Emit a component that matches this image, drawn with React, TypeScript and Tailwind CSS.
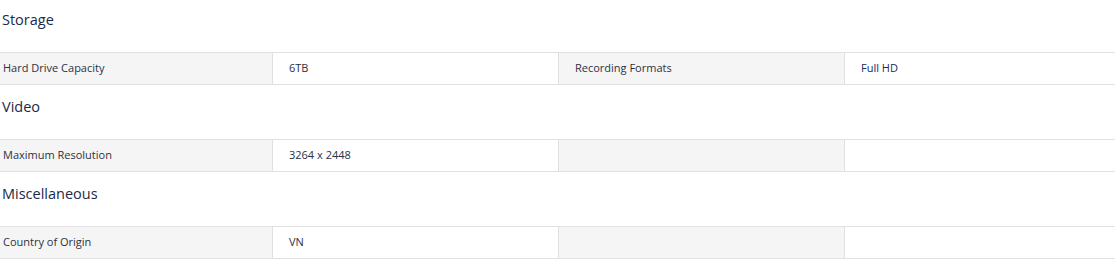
import React from "react";

const sections: { title: string; cells: [string, string, string, string] }[] = [
  { title: "Storage", cells: ["Hard Drive Capacity", "6TB", "Recording Formats", "Full HD"] },
  { title: "Video", cells: ["Maximum Resolution", "3264 x 2448", "", ""] },
  { title: "Miscellaneous", cells: ["Country of Origin", "VN", "", ""] },
];

export default function App() {
  return (
    <div className="w-[1115px] bg-white" style={{ fontFamily: '"Open Sans", "Noto Sans", sans-serif' }}>
      {sections.map((s, i) => (
        <div key={i} className="mb-[2px]">
          <div className="h-[52px] flex items-center pl-[2px] pb-[12px] text-[14.5px] text-[#1b2a48]">{s.title}</div>
          <div className="grid grid-cols-[272px_286px_286px_1fr] border-y border-[#e0e0e0] text-[11px] text-[#2d3142]">
            <div className="h-[31px] flex items-center pl-[3px] bg-[#f5f5f5]">{s.cells[0]}</div>
            <div className="h-[31px] flex items-center pl-[16px] border-l border-[#e0e0e0]">{s.cells[1]}</div>
            <div className="h-[31px] flex items-center pl-[16px] border-l border-[#e0e0e0] bg-[#f5f5f5]">{s.cells[2]}</div>
            <div className="h-[31px] flex items-center pl-[16px] border-l border-[#e0e0e0] text-[#1b2a5e]">{s.cells[3]}</div>
          </div>
        </div>
      ))}
    </div>
  );
}
